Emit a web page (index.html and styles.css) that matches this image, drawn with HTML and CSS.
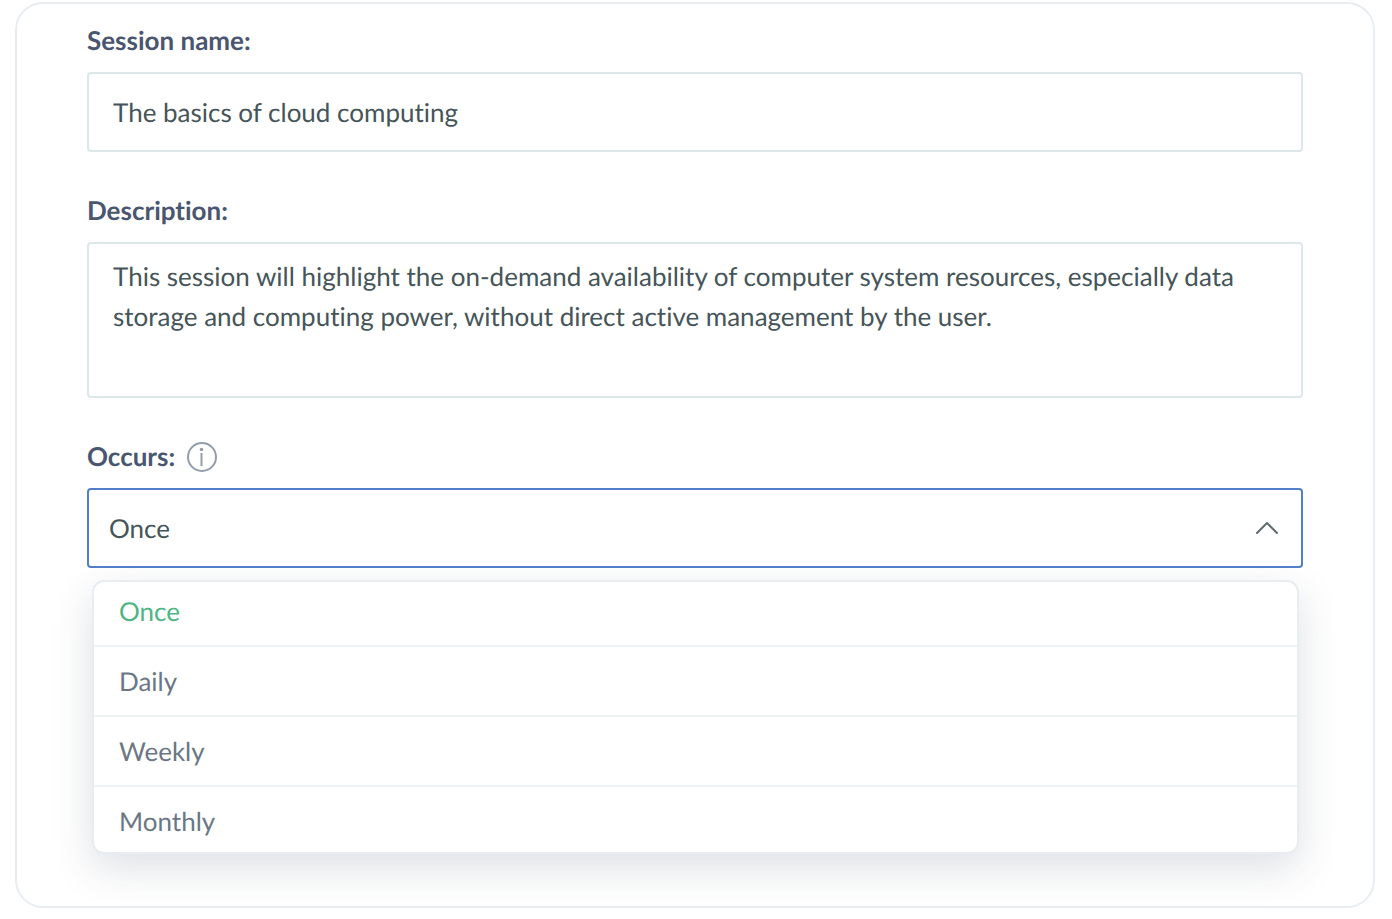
FILE: index.html
```html
<!DOCTYPE html>
<html lang="en">
<head>
  <meta charset="UTF-8" />
  <meta name="viewport" content="width=device-width, initial-scale=1.0"/>
  <title>Session</title>
  <link rel="stylesheet" href="styles.css">
</head>
<body>
  <form class="session-card">
    <div class="form-group">
      <div class="label-row">
        <label for="session-name">Session name:</label>
      </div>
      <input type="text" class="field" id="session-name" value="The basics of cloud computing">
    </div>

    <div class="form-group">
      <div class="label-row">
        <label for="description">Description:</label>
      </div>
      <textarea class="field" id="description">This session will highlight the on-demand availability of computer system resources, especially data storage and computing power, without direct active management by the user.</textarea>
    </div>

    <div class="form-group">
      <div class="label-row">
        <label for="occurs">Occurs:</label>
        <svg class="info-icon" viewBox="0 0 30 30" aria-hidden="true">
          <circle cx="15" cy="15" r="14" />
          <path d="M14.5 11v13" />
          <circle class="dot" cx="14.5" cy="7.5" r="1.8" />
        </svg>
      </div>
      <div class="select-wrap">
        <select class="field open" id="occurs">
          <option selected>Once</option>
          <option>Daily</option>
          <option>Weekly</option>
          <option>Monthly</option>
        </select>
        <svg class="chevron" viewBox="0 0 24 14" aria-hidden="true">
          <path d="M2 12 12 2l10 10" />
        </svg>
      </div>
      <div class="menu">
        <button type="button" class="menu-item selected">Once</button>
        <button type="button" class="menu-item">Daily</button>
        <button type="button" class="menu-item">Weekly</button>
        <button type="button" class="menu-item">Monthly</button>
      </div>
    </div>
  </form>

  <script>
    const occurs = document.getElementById('occurs');
    const items = document.querySelectorAll('.menu-item');

    items.forEach((item) => {
      item.addEventListener('click', () => {
        items.forEach((other) => other.classList.remove('selected'));
        item.classList.add('selected');
        occurs.value = item.textContent;
      });
    });
  </script>
</body>
</html>
```

FILE: styles.css
```css
:root {
  --label: #4a5670;
  --text: #465559;
  --muted: #6b7785;
  --border: #dce7ea;
  --border-light: #e8edf1;
  --focus: #527ecb;
  --selected: #50b583;
}

* {
  margin: 0;
  padding: 0;
  box-sizing: border-box;
  font-family: Lato, sans-serif;
  font-variant-ligatures: none;
  text-rendering: geometricPrecision;
}

body {
  background-color: #fff;
  color: var(--text);
  padding: 2px 17px 11px 15px;
  font-size: 26px;
  line-height: 40px;
}

.session-card {
  display: flex;
  flex-direction: column;
  gap: 38px;
  padding: 16px 70px 52px;
  border: 2px solid var(--border-light);
  border-radius: 28px;
}

.form-group {
  display: flex;
  flex-direction: column;
}

.label-row {
  display: flex;
  align-items: center;
  gap: 12px;
  margin-bottom: 10px;
}

label {
  padding-bottom: 2px;
  color: var(--label);
  font-weight: 700;
}

.info-icon {
  width: 30px;
  height: 30px;
  fill: none;
  stroke: #929dab;
  stroke-width: 2;
}

.info-icon .dot {
  fill: #929dab;
  stroke: none;
}

.field {
  display: block;
  width: 100%;
  height: 80px;
  padding: 0 24px;
  border: 2px solid var(--border);
  border-radius: 4px;
  background-color: #fff;
  color: var(--text);
  font-size: 26px;
  line-height: 40px;
  outline: none;
}

textarea.field {
  height: 156px;
  padding-top: 12px;
  resize: none;
}

select.field {
  padding: 0 20px;
  appearance: none;
}

.field:focus,
.field.open {
  border-color: var(--focus);
}

.select-wrap {
  position: relative;
}

.chevron {
  position: absolute;
  top: 33px;
  right: 24px;
  width: 24px;
  height: 14px;
  fill: none;
  stroke: #606b71;
  stroke-width: 2;
  stroke-linecap: round;
  stroke-linejoin: round;
  pointer-events: none;
}

.menu {
  display: flex;
  flex-direction: column;
  margin: 12px 4px 0 5px;
  border: 2px solid var(--border-light);
  border-radius: 12px;
  background-color: #fff;
  box-shadow: 0 14px 40px rgba(50, 65, 85, 0.16);
  overflow: hidden;
}

.menu-item {
  padding: 14px 25px;
  border: none;
  border-bottom: 2px solid #eff3f6;
  background: none;
  color: var(--muted);
  font-size: 26px;
  line-height: 40px;
  text-align: left;
  cursor: pointer;
}

.menu-item:first-child {
  padding-top: 9px;
}

.menu-item:last-child {
  padding-bottom: 11px;
  border-bottom: none;
}

.menu-item.selected {
  color: var(--selected);
}
```
